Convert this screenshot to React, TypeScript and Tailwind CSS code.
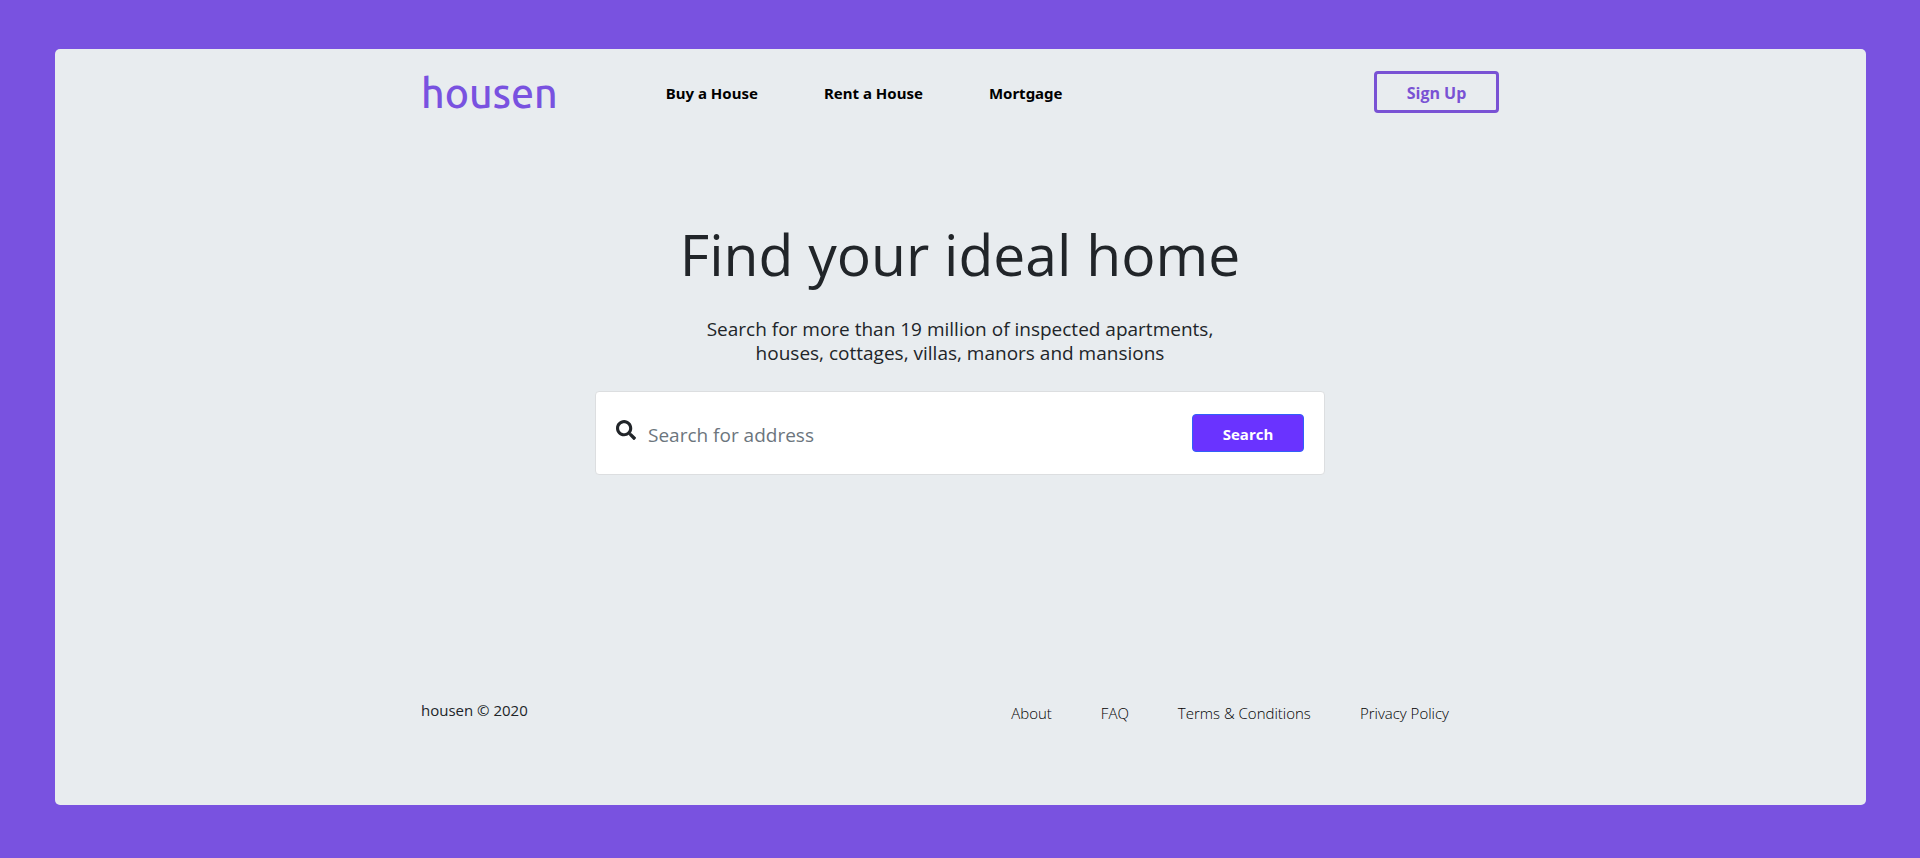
import { FaSearch } from "react-icons/fa";

const navLinks = ["Buy a House", "Rent a House", "Mortgage"];
const footerLinks = ["About", "FAQ", "Terms & Conditions", "Privacy Policy"];

function Header() {
  return (
    <header className="flex items-center pt-[22px]">
      <a href="#home" className="pt-0.5 font-['Ubuntu','Noto_Sans',sans-serif] text-[41px] leading-[40px] font-medium text-[#7952e0]">
        housen
      </a>
      <nav className="ml-[108px] flex gap-[66px] pt-0.5">
        {navLinks.map((label) => (
          <a key={label} href="#browse" className="font-['Noto_Sans',sans-serif] text-[15px] leading-6 font-bold text-black">
            {label}
          </a>
        ))}
      </nav>
      <button type="button" className="ml-auto h-[42px] w-[125px] rounded border-3 border-[#7952d4] pt-0.5 text-[16px] font-bold text-[#7952d4]">
        Sign Up
      </button>
    </header>
  );
}

function SearchCard() {
  return (
    <form
      className="mt-[26px] flex w-full max-w-[730px] items-center rounded border border-[#dcdee0] bg-white px-5 py-[21px]"
      onSubmit={(event) => event.preventDefault()}
    >
      <label htmlFor="address" className="pb-1.5 text-[#212529]">
        <FaSearch aria-label="Address" className="size-5" />
      </label>
      <input
        id="address"
        type="text"
        placeholder="Search for address"
        className="ml-3 h-10 min-w-0 flex-1 bg-transparent pt-1 text-[19px] text-[#212529] outline-none placeholder:text-[#6c757d]"
      />
      <button type="submit" className="h-[38px] w-[112px] rounded border border-[#3060f8] bg-[#6a33ff] pt-0.5 text-[15px] font-bold text-white">
        Search
      </button>
    </form>
  );
}

export default function App() {
  return (
    <div className="flex min-h-screen flex-col bg-[#7952e0] pt-[49px] pr-[54px] pb-[53px] pl-[55px] font-['Open_Sans',sans-serif] text-[#212529]">
      <div className="flex flex-1 flex-col rounded-[5px] bg-[#e8ecef] pr-px">
        <div className="mx-auto flex w-full max-w-[1078px] flex-1 flex-col">
          <Header />
          <main className="flex flex-col items-center pt-[105px] text-center">
            <h1 className="text-[57px] leading-[72px]">Find your ideal home</h1>
            <p className="mt-[27px] max-w-[520px] text-[19px] leading-6">
              Search for more than 19 million of inspected apartments, houses, cottages, villas, manors and mansions
            </p>
            <SearchCard />
          </main>
          <footer className="mt-auto flex justify-between pb-[80px]">
            <p className="text-[15px] leading-6">housen © 2020</p>
            <nav className="mr-[50px] flex gap-[49px] pt-[3px]">
              {footerLinks.map((label) => (
                <a key={label} href="#info" className="text-[15px] leading-6 font-light text-black">
                  {label}
                </a>
              ))}
            </nav>
          </footer>
        </div>
      </div>
    </div>
  );
}
